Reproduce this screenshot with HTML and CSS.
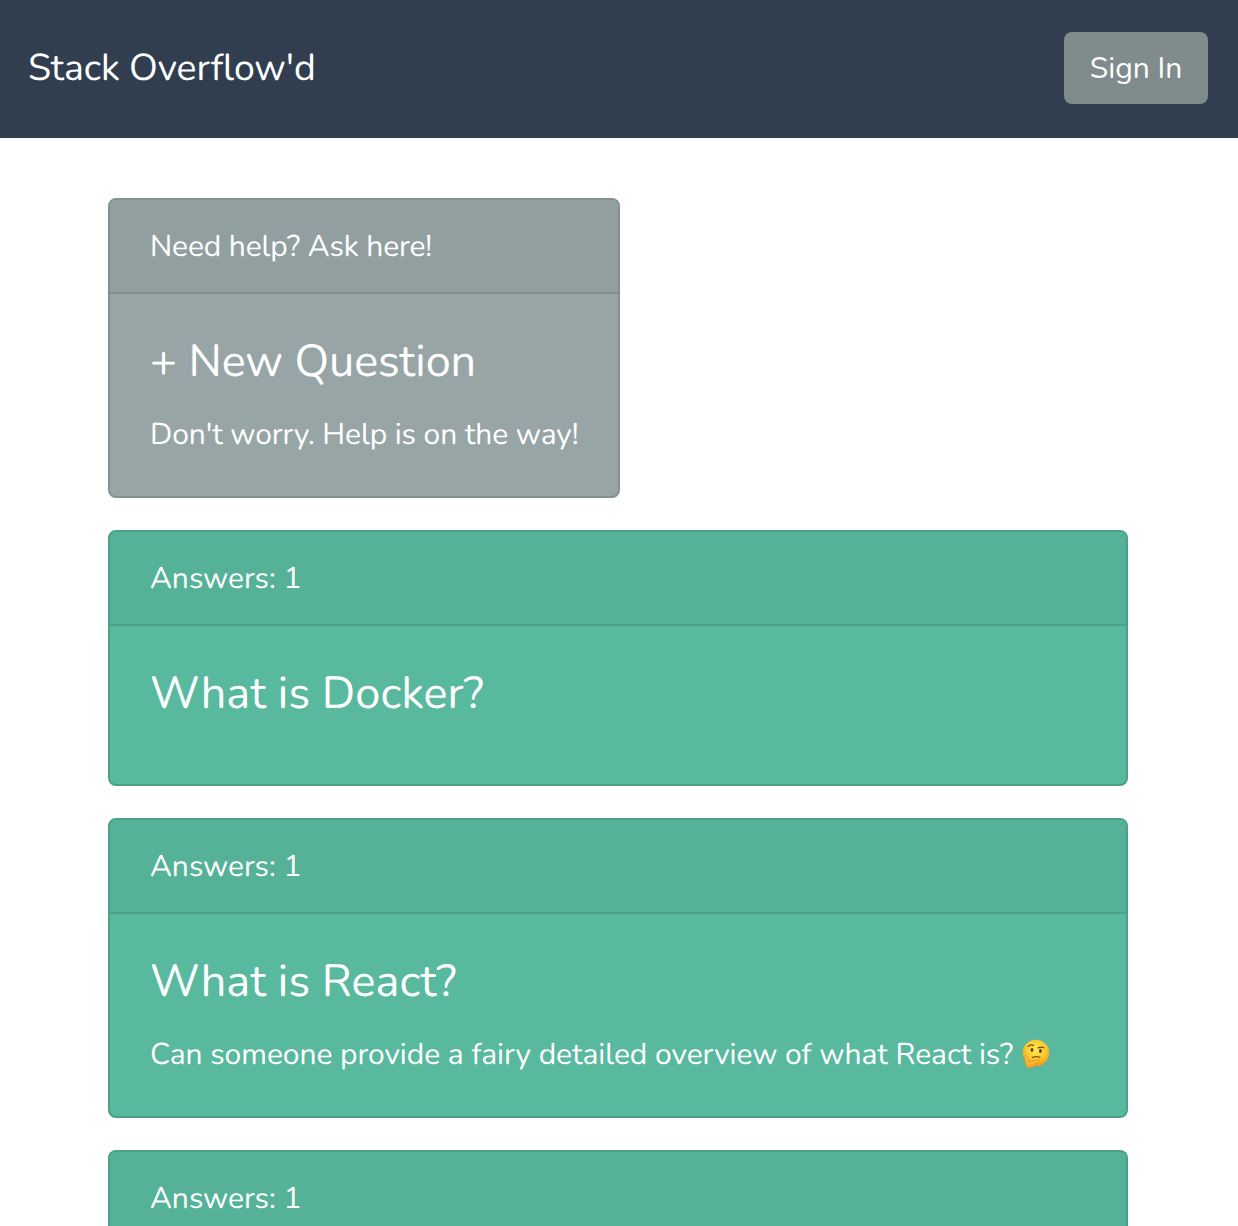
FILE: index.html
```html
<!DOCTYPE html>
<html lang="en">
<head>
<meta charset="utf-8">
<title>Stack Overflow'd</title>
<link rel="stylesheet" href="styles.css">
</head>
<body>
<header class="navbar">
  <a class="brand">Stack Overflow'd</a>
  <button class="sign-in" type="button">Sign In</button>
</header>
<main class="container">
  <section class="card card-ask">
    <div class="card-header">Need help? Ask here!</div>
    <div class="card-body">
      <h4 class="card-title">+ New Question</h4>
      <p class="card-text">Don't worry. Help is on the way!</p>
    </div>
  </section>
  <section class="card card-question">
    <div class="card-header">Answers: 1</div>
    <div class="card-body">
      <h4 class="card-title">What is Docker?</h4>
      <p class="card-text"></p>
    </div>
  </section>
  <section class="card card-question">
    <div class="card-header">Answers: 1</div>
    <div class="card-body">
      <h4 class="card-title">What is React?</h4>
      <p class="card-text card-text-emoji"><span>Can someone provide a fairy detailed overview of what React is?</span>
        <svg class="emoji" viewBox="0 0 30 30" role="img" aria-label="thinking face">
          <defs>
            <radialGradient id="face" cx="50%" cy="38%" r="62%">
              <stop offset="0" stop-color="#ffe94f"/>
              <stop offset=".6" stop-color="#fdc931"/>
              <stop offset="1" stop-color="#ee951d"/>
            </radialGradient>
            <linearGradient id="hand" x1="0" y1="0" x2="0" y2="1">
              <stop offset="0" stop-color="#ffd54a"/>
              <stop offset="1" stop-color="#f5a623"/>
            </linearGradient>
          </defs>
          <circle cx="16" cy="14" r="13.3" fill="url(#face)"/>
          <path d="M8.200 7.400q2.200-2.300 5.300-1M18 9q3-1.800 5.800-.2" fill="none" stroke="#764716" stroke-width="1.200" stroke-linecap="round"/>
          <ellipse cx="12" cy="10.800" rx="1.400" ry="1.900" fill="#59351a"/>
          <ellipse cx="20.400" cy="12" rx="1.400" ry="1.900" fill="#59351a"/>
          <path d="M12.200 18.600q3.800-1.900 7.800-.3" fill="none" stroke="#84500f" stroke-width="1.200" stroke-linecap="round"/>
          <path d="M7.300 17.600c-.9-1.400-2.700-.8-2.400.9l.7 3.300c-.9 3.600.3 6.700 4 6.900 3.500.2 5.200-1.400 5.400-4.100 1.700-.5 3.300-1.400 4.200-2.500.7-1.200-.3-2-1.500-1.600l-7.200 1.900-2 .4z" fill="url(#hand)" stroke="#df8518" stroke-width=".6"/>
        </svg>
      </p>
    </div>
  </section>
  <section class="card card-question card-last">
    <div class="card-header">Answers: 1</div>
  </section>
</main>
</body>
</html>
```
FILE: styles.css
```css
* { box-sizing: border-box; }
body {
  margin: 0;
  background: #fff;
  color: #fff;
  font-family: Nunito, Lato, sans-serif;
  font-size: 30px;
  line-height: 44px;
  text-rendering: geometricPrecision;
}
.navbar {
  display: flex;
  align-items: center;
  justify-content: space-between;
  height: 138px;
  padding: 0 30px 2px 28px;
  background: #303e4f;
}
.brand { padding-top: 1px; font-size: 37.5px; line-height: 56px; white-space: nowrap; letter-spacing: -0.12px; }
.sign-in {
  width: 144px;
  height: 72px;
  padding: 2px 0 0;
  border: 0;
  border-radius: 8px;
  background: #808b8c;
  color: #fff;
  font: inherit;
}
.container {
  display: flex;
  flex-direction: column;
  align-items: flex-start;
  gap: 32px;
  width: 1020px;
  margin: 60px 0 0 108px;
}
.card { width: 100%; border: 2px solid; border-radius: 8px; white-space: nowrap; }
.card-header { padding: 25px 40px 23px; border-bottom: 2px solid; border-radius: 6px 6px 0 0; }
.card-body { padding: 41px 40px 39px; }
.card-title { margin: 0 0 24px; font-size: 45px; line-height: 54px; font-weight: 400; }
.card-text { margin: 0; }
.card-ask { width: 512px; background: #98a5a6; }
.card-ask, .card-ask .card-header { border-color: #819090; }
.card-ask .card-header { background: #929fa0; letter-spacing: -0.12px; }
.card-ask .card-title { letter-spacing: -0.08px; }
.card-ask .card-text { letter-spacing: -0.09px; }
.card-question { background: #58b99e; }
.card-question, .card-question .card-header { border-color: #4ba088; }
.card-question .card-header { background: #55b298; }
.card-question .card-title { letter-spacing: 0.1px; }
.card-text-emoji { display: flex; align-items: center; gap: 7px; letter-spacing: -0.04px; }
.emoji { width: 30px; height: 30px; margin-top: -2px; flex: none; }
.card-last { height: 76px; border-bottom: 0; border-radius: 8px 8px 0 0; }
.card-last .card-header { height: 74px; padding-bottom: 0; border-bottom: 0; }
```
